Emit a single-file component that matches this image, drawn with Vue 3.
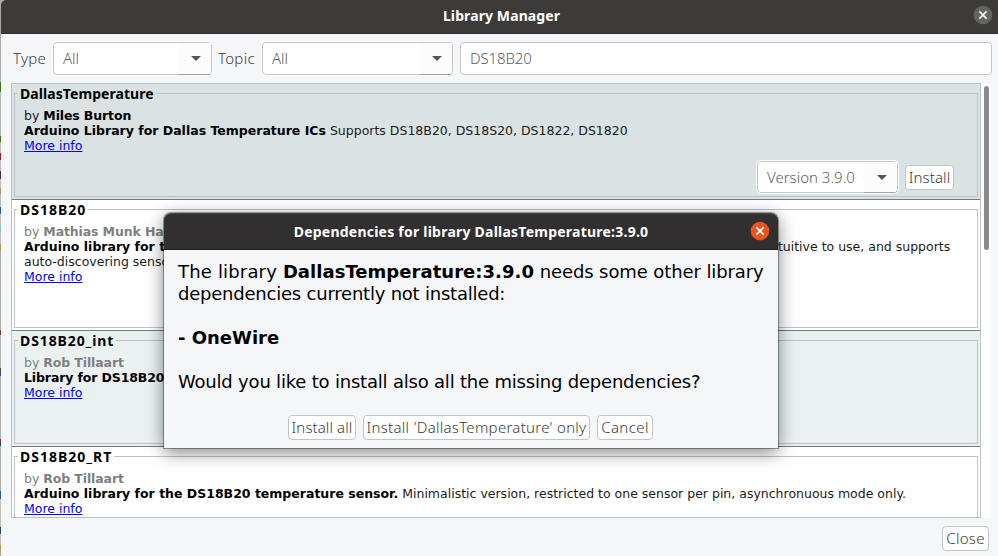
<script setup>
const libs = [
  { name: 'DallasTemperature', author: 'Miles Burton', bold: 'Arduino Library for Dallas Temperature ICs', text: 'Supports DS18B20, DS18S20, DS1822, DS1820', kind: 'selected', install: true },
  { name: 'DS18B20', author: 'Mathias Munk Hansen', bold: 'Arduino library for the Maxim Integrated DS18B20 1-Wire temperature sensor.', text: 'This library is very simple and intuitive to use, and supports', more: 'auto-discovering sensors', kind: 'tall' },
  { name: 'DS18B20_int', author: 'Rob Tillaart', bold: 'Library for DS18B20 temperature sensor', text: '', kind: 'odd' },
  { name: 'DS18B20_RT', author: 'Rob Tillaart', bold: 'Arduino library for the DS18B20 temperature sensor.', text: 'Minimalistic version, restricted to one sensor per pin, asynchronuous mode only.', kind: 'plain' },
]
</script>

<template>
  <div class="screen">
    <div class="edge"></div>
    <div class="window">
      <header class="titlebar">
        <span class="title">Library Manager</span>
        <svg class="close" viewBox="0 0 20 20"><circle cx="10" cy="10" r="9.3" /><path d="M6.4 6.4 13.6 13.6M13.6 6.4 6.4 13.6" /></svg>
      </header>
      <div class="filters">
        <span class="label type">Type</span>
        <div class="combo"><span class="value">All</span><span class="arrow"></span></div>
        <span class="label topic">Topic</span>
        <div class="combo second"><span class="value">All</span><span class="arrow"></span></div>
        <div class="search">DS18B20</div>
      </div>
      <div class="listwrap">
        <div class="list">
          <section v-for="lib in libs" :key="lib.name" class="row" :class="lib.kind">
            <div class="box">
              <div class="legend"><span class="name">{{ lib.name }}</span></div>
              <div class="desc">
                <div class="by">by <b>{{ lib.author }}</b></div>
                <div class="sentence"><b>{{ lib.bold }}</b> <span class="rest">{{ lib.text }}</span></div>
                <div v-if="lib.more">{{ lib.more }}</div>
                <div><a>More info</a></div>
              </div>
              <div v-if="lib.install" class="actions">
                <div class="combo version"><span class="value">Version 3.9.0</span><span class="arrow"></span></div>
                <button class="btn install">Install</button>
              </div>
            </div>
          </section>
        </div>
        <div class="track"><div class="thumb"></div></div>
      </div>
      <footer class="footer"><button class="btn closebtn">Close</button></footer>
    </div>
    <div class="dialog">
      <header class="dtitle">
        <span class="title">Dependencies for library DallasTemperature:3.9.0</span>
        <svg class="close hot" viewBox="0 0 20 20"><circle cx="10" cy="10" r="9.3" /><path d="M6.4 6.4 13.6 13.6M13.6 6.4 6.4 13.6" /></svg>
      </header>
      <div class="message">
        <div class="l1"><span class="lead">The library </span><b>DallasTemperature:3.9.0</b><span class="tail"> needs some other library</span></div>
        <div class="l2">dependencies currently not installed:</div>
        <div>&nbsp;</div>
        <div class="l3"><b>- OneWire</b></div>
        <div>&nbsp;</div>
        <div class="l4">Would you like to install also all the missing dependencies?</div>
      </div>
      <div class="buttons">
        <button class="btn all">Install all</button>
        <button class="btn only">Install 'DallasTemperature' only</button>
        <button class="btn cancel">Cancel</button>
      </div>
    </div>
  </div>
</template>

<style scoped>
* { box-sizing: border-box; }
.screen { position: relative; display: flex; width: 998px; height: 556px; overflow: hidden; font-family: "Noto Sans", sans-serif; background: #a9a9a9; }
.edge {
  width: 1px; height: 556px; flex: none;
  background: linear-gradient(#a9a9a9 82px, #3f7a12 82px 92px, #b4b4b4 92px 136px, #3f7a12 136px 142px, #bcbcbc 142px 153px, #a0142c 153px 160px, #bcbcbc 160px 171px, #4d2a33 171px 179px, #bcbcbc 179px 188px, #b8945c 188px 194px, #bcbcbc 194px 207px, #2c5d94 207px 214px, #bcbcbc 214px 226px, #86c4c4 226px 232px, #bcbcbc 232px 244px, #b8945c 244px 251px, #acacac 251px 330px, #7c4234 330px 335px, #b4b4b4 335px 368px, #6e4228 368px 371px, #2b4c78 371px 376px, #acacac 376px 439px, #70402c 439px 442px, #2b3d68 442px 446px, #86c4c4 446px 449px, #acacac 449px 491px, #2c5d94 491px 499px, #c0bcb0 499px 527px, #2b4466 527px 534px, #c0bcb0 534px 545px, #b8945c 545px 553px, #acacac 553px);
}
.window { width: 997px; height: 556px; background: #f5f6f8; display: flex; flex-direction: column; border-top-left-radius: 5px; overflow: hidden; }
.titlebar { height: 34px; flex: none; background: #3d3b39; border-bottom: 1px solid #3a2b30; display: flex; align-items: center; justify-content: center; position: relative; }
.title { color: #fff; font-weight: 700; font-size: 14px; line-height: 20px; white-space: nowrap; }
.titlebar .title { margin-top: -1px; margin-left: 4px; letter-spacing: .1px; }
.dtitle .title { letter-spacing: .23px; }
.close { position: absolute; width: 20px; height: 20px; right: 5px; top: 5px; }
.close circle { fill: #636362; }
.close path { stroke: #fff; stroke-width: 1.6; fill: none; }
.close.hot { right: 8px; top: 7px; }
.close.hot circle { fill: #e95420; }
.filters { height: 49px; flex: none; display: flex; align-items: center; padding-left: 12px; font-weight: 300; font-size: 15px; color: #3c3c3c; }
.label { white-space: nowrap; margin-top: -2px; letter-spacing: .3px; }
.type { width: 40px; }
.combo { display: flex; width: 159px; height: 33px; border: 1px solid #c5c6ca; border-radius: 4px; background: #fff; box-shadow: 0 0 0 1px #fcfcfd; color: #5b5d5f; font-size: 15px; font-weight: 300; line-height: 31px; }
.value { flex: 1; padding-left: 9px; white-space: nowrap; }
.arrow { width: 33px; padding-left: 3px; display: flex; align-items: center; justify-content: center; background: #fcfcfc; border-bottom: 1px solid #a0a0a2; border-radius: 0 0 3px 0; margin-bottom: -1px; }
.arrow::after { content: ""; border: 5px solid transparent; border-top-color: #555; border-bottom: 0; }
.topic { width: 44px; margin-left: 6px; }
.second { width: 191px; }
.search { width: 532px; height: 33px; margin-left: 7px; border: 1px solid #c0c4cc; border-radius: 4px; background: #fff; padding-left: 9px; line-height: 31px; color: #5b5d5f; letter-spacing: -.15px; }
.listwrap { display: flex; height: 435px; padding-left: 10px; flex: none; }
.list { width: 970px; height: 435px; border: 1px solid #bbc2ca; overflow: hidden; background: #fff; }
.row { height: 116px; border-bottom: 1px solid #777b7b; padding: 9px 2px 2px; }
.tall { height: 131px; }
.selected { background: #dae2e3; }
.odd { background: #ebf1f1; }
.box { height: 100%; border: 1px solid #bcc2ca; display: flex; flex-direction: column; }
.plain .box { height: 104px; }
.legend { height: 14px; margin-top: -9px; display: flex; padding-left: 3px; margin-bottom: 9px; }
.name { background: #fff; font-weight: 700; font-size: 14px; line-height: 18px; height: 18px; padding: 0 2px; color: #000; letter-spacing: 1px; }
.selected .name { background: #dae2e3; letter-spacing: .07px; }
.odd .name { background: #ebf1f1; letter-spacing: .9px; }
.desc { padding-left: 9px; font: 12.5px/15px "DejaVu Sans", sans-serif; color: #1a1a1a; white-space: nowrap; }
.desc > div { height: 15px; }
.desc b { color: #000; }
.desc .by, .desc .by b { color: #808080; }
.by b { letter-spacing: -.12px; }
.selected .desc .by { color: #1a1a1a; }
.selected .desc .by b { color: #000; }
.odd .sentence b { letter-spacing: -.12px; }
.tall .rest { margin-left: -8px; }
.desc a { color: #00f; text-decoration: underline; }
.actions { display: flex; align-items: center; justify-content: flex-end; padding-right: 23px; margin-top: 8px; }
.version { width: 141px; height: 32px; line-height: 30px; }
.btn { height: 25px; padding: 0; border: 1px solid #c0c4cc; border-radius: 4px; background: #fff; color: #3c3c3c; font: 300 15px/23px "Noto Sans", sans-serif; text-align: center; white-space: nowrap; }
.install { width: 49px; margin-left: 7px; letter-spacing: .1px; }
.track { width: 10px; background: #fff; padding: 3px 0 0 3px; }
.thumb { width: 5px; height: 164px; background: #8b8b8b; border-radius: 3px; }
.footer { display: flex; justify-content: flex-end; padding: 8px 9px 0 0; }
.closebtn { width: 47px; letter-spacing: .3px; }
.dialog { position: absolute; left: 164px; top: 213px; width: 614px; height: 235px; background: #f5f6f8; border-radius: 7px 7px 0 0; box-shadow: 0 0 0 1px rgba(0,0,0,.35), 0 4px 18px rgba(0,0,0,.5); }
.dtitle { position: relative; height: 37px; background: #322f30; border-top: 1px solid #4a4848; border-bottom: 1px solid #1c1a1b; border-radius: 7px 7px 0 0; display: flex; justify-content: center; align-items: center; }
.message { padding: 11px 0 0 14px; font: 18px/22px "DejaVu Sans", sans-serif; color: #000; white-space: nowrap; height: 165px; }
.message > div { height: 22px; }
.lead { letter-spacing: .17px; }
.l1 b { letter-spacing: .04px; }
.tail { letter-spacing: -.1px; }
.l2 { letter-spacing: -.22px; }
.l4 { letter-spacing: -.2px; }
.buttons { display: flex; gap: 7px; padding-left: 124px; }
.all { width: 68px; letter-spacing: .1px; }
.only { width: 227px; letter-spacing: .28px; }
.cancel { width: 56px; letter-spacing: .4px; }
</style>
<style>
body { overflow: hidden; }
</style>
